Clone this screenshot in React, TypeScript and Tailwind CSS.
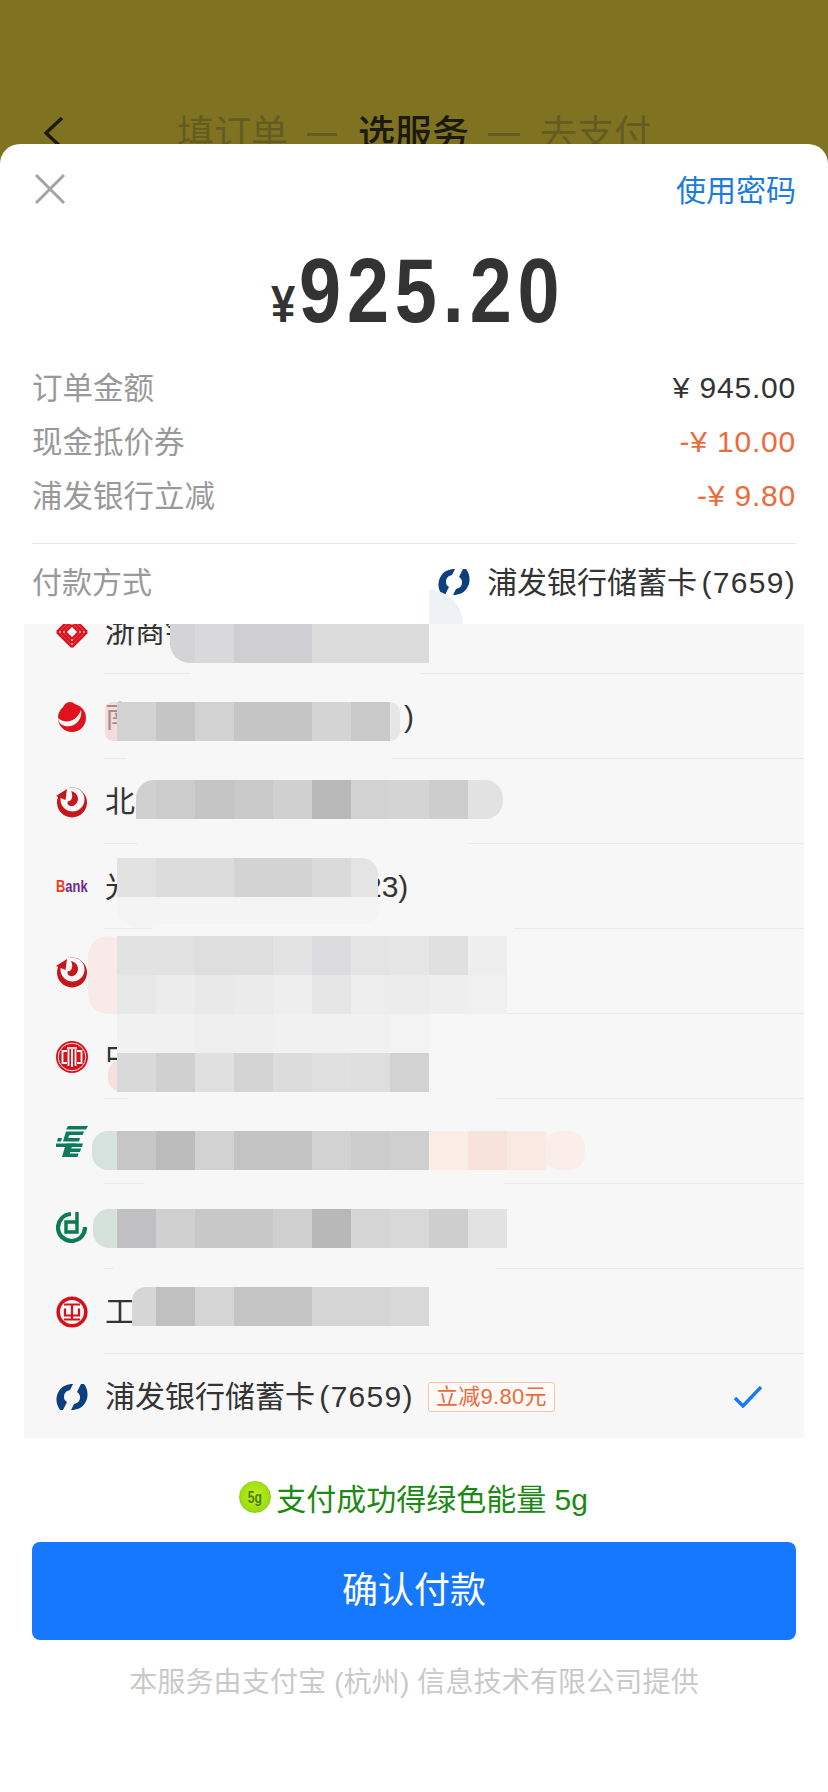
import React from "react";

const cjk = "font-['Liberation_Sans','Noto_Sans_CJK_SC',sans-serif]";

const SpdbIcon = () => (
  <svg width="32" height="28" viewBox="0 0 32 28" fill="#0b3f7e">
    <path d="M4 27C0 22-1 14 3 8C6 3 11 1 17 1L14 7C10 8 8 10 8 14C8 16 9 18 11 19L7 27Z" />
    <path d="M4 27C0 22-1 14 3 8C6 3 11 1 17 1L14 7C10 8 8 10 8 14C8 16 9 18 11 19L7 27Z" transform="rotate(180 16 14)" />
  </svg>
);

const CzbIcon = () => (
  <svg width="32" height="32" viewBox="0 0 32 32">
    <g stroke="#d9141f" strokeWidth="2.6" fill="none">
      <path d="M1 16L16 1M5 16L16 5M9 16L16 9" />
      <path d="M1 16L16 31M5 16L16 27M9 16L16 23" />
      <path d="M31 16L16 31M27 16L16 27M23 16L16 23" />
      <path d="M31 16L16 1M27 16L16 5M23 16L16 9" />
    </g>
    <path d="M16 13L19 16L16 19L13 16Z" fill="#f7f7f7" />
  </svg>
);

const CrescentIcon = () => (
  <svg width="32" height="32" viewBox="0 0 32 32">
    <circle cx="16" cy="17" r="14" fill="#e0131d" />
    <circle cx="14" cy="8" r="7" fill="#e0131d" />
    <path d="M2 17C8 23 20 22 25 9C27 18 19 27 9 25C5 24 2 21 2 17Z" fill="#f7f7f7" />
  </svg>
);

const SwirlIcon = () => (
  <svg width="32" height="32" viewBox="0 0 32 32">
    <circle cx="16" cy="16.5" r="15" fill="#c4161c" />
    <circle cx="16.5" cy="13.5" r="12" fill="#f7f7f7" />
    <path d="M0 0H15L10 5L7 11H0Z" fill="#f7f7f7" />
    <path d="M0 10L11 3L9.5 14Z" fill="#c4161c" />
    <path d="M15 5C23 7 24 15 19 19C15 22 10 19 12 15C15 16 18 11 15 5Z" fill="#c4161c" />
  </svg>
);

const BankIcon = () => (
  <div className="w-[32px] origin-left scale-x-[0.76] font-['Liberation_Sans',sans-serif] text-[17px] leading-none font-bold whitespace-nowrap text-[#6b2a90]">
    <span className="text-[#ee3b1c]">B</span>
    <span>ank</span>
  </div>
);

const CiticIcon = () => (
  <svg width="32" height="32" viewBox="0 0 32 32" fill="none">
    <circle cx="16" cy="16" r="16" fill="#d3121c" />
    <circle cx="16" cy="16" r="13.8" stroke="#fff" strokeWidth="0.9" />
    <path d="M11 10H6.5V22H11" stroke="#fff" strokeWidth="1.8" />
    <path d="M21 10H25.5V22H21" stroke="#fff" strokeWidth="1.8" />
    <path d="M11 7H21" stroke="#fff" strokeWidth="1.6" />
    <path d="M12.5 8V25M16 8V26M19.5 8V25" stroke="#fff" strokeWidth="1.8" />
  </svg>
);

const PsbcIcon = () => (
  <svg width="32" height="31" viewBox="0 0 32 31" fill="#0d7a5f">
    <path d="M12 0H32L30 3.4H10Z" />
    <path d="M10 5.6H28L26.6 9H13.5L12 12H24L23 15.4H7L8 12Z" />
    <path d="M2 12H6L5 15.4H1Z" />
    <path d="M0 17.6H20L19 21H0Z" />
    <path d="M11 17.6H27L26 21H16L15 22.6H25L24 26H14.4L13.6 27.6H22.5L21.5 31H6L8.5 22.6Z" />
  </svg>
);

const GrcbIcon = () => (
  <svg width="32" height="32" viewBox="0 0 32 32" fill="none" stroke="#0a7b52">
    <path d="M15 3A13.5 13.5 0 1 0 29 16" strokeWidth="4.2" />
    <path d="M21 1V21H10V11H20" strokeWidth="3.4" />
  </svg>
);

const IcbcIcon = () => (
  <svg width="32" height="32" viewBox="0 0 32 32" fill="none" stroke="#d3121c">
    <circle cx="16" cy="16" r="13.8" strokeWidth="3.6" />
    <path d="M8 8.5H24M16 8.5V23.5M8 23.5H24M9 12.5V19.5H23V12.5" strokeWidth="2.2" />
  </svg>
);

// tailGap keeps the bit of text showing past the mosaic at its place in the row
const rows: { id: string; icon: React.ReactNode; head: string; tail?: string; tailGap?: number }[] = [
  { id: "czb", icon: <CzbIcon />, head: "浙商银" },
  { id: "njb", icon: <CrescentIcon />, head: "南", tail: ")", tailGap: 269 },
  { id: "bob", icon: <SwirlIcon />, head: "北" },
  { id: "ceb", icon: <BankIcon />, head: "光", tail: "23)", tailGap: 230 },
  { id: "bob2", icon: <SwirlIcon />, head: "" },
  { id: "citic", icon: <CiticIcon />, head: "中" },
  { id: "psbc", icon: <PsbcIcon />, head: "" },
  { id: "grcb", icon: <GrcbIcon />, head: "" },
  { id: "icbc", icon: <IcbcIcon />, head: "工" },
];

// smudges in the list colour, coordinates are relative to the list box
const smudges = [
  { x: 166, y: 44, w: 230, h: 12, r: 6, c: "#f7f7f7" },
  { x: 102, y: 130, w: 266, h: 12, r: 6, c: "#f7f7f7" },
  { x: 114, y: 215, w: 330, h: 12, r: 6, c: "#f7f7f7" },
  { x: 93, y: 260, w: 263, h: 44, r: 22, c: "#f4f4f4" },
  { x: 128, y: 300, w: 362, h: 10, r: 5, c: "#f7f7f7" },
  { x: 64, y: 312, w: 40, h: 78, r: 26, c: "#f9eaea" },
  { x: 84, y: 436, w: 30, h: 32, r: 14, c: "#f7dfe0" },
  { x: 104, y: 470, w: 368, h: 10, r: 5, c: "#f7f7f7" },
  { x: 68, y: 507, w: 40, h: 39, r: 16, c: "#d5e2de" },
  { x: 520, y: 507, w: 41, h: 39, r: 16, c: "#fbeee9" },
  { x: 120, y: 555, w: 360, h: 10, r: 5, c: "#f7f7f7" },
  { x: 69, y: 585, w: 40, h: 39, r: 16, c: "#d5e2dc" },
  { x: 90, y: 640, w: 382, h: 10, r: 5, c: "#f7f7f7" },
];

// mosaic tiles, 39px square on a shared grid
const mosaics: { x: number; y: number; cells: string[] }[] = [
  { x: 171, y: 0, cells: ["#d9d9db", "#cfcfd1", "#cfcfd1", "#dcdcdd", "#dcdcdd", "#dcdcdd"] },
  { x: 93, y: 78, cells: ["#d2d2d2", "#c5c5c5", "#d2d2d2", "#c5c5c5", "#c5c5c5", "#d4d4d4", "#c9c9c9"] },
  { x: 132, y: 156, cells: ["#cccccc", "#c5c5c5", "#c9c9c9", "#d0d0d0", "#b9b9b9", "#d2d2d2", "#d4d4d4", "#cdcdcd"] },
  { x: 93, y: 234, cells: ["#e2e2e2", "#dcdcdc", "#dcdcdc", "#d3d3d3", "#d3d3d3", "#dadada"] },
  { x: 93, y: 312, cells: ["#e2e2e2", "#e2e2e2", "#dedede", "#dedede", "#e3e3e3", "#dcdcde", "#e4e4e4", "#e6e6e6", "#e0e0e0", "#eeeeee"] },
  { x: 93, y: 351, cells: ["#e8e8e8", "#ececec", "#e9e9e9", "#ebebeb", "#eeeeee", "#e6e6e6", "#ededed", "#ececec", "#eeeeee", "#f0f0f0"] },
  { x: 93, y: 390, cells: ["#f1f1f1", "#f1f1f1", "#efefef", "#efefef", "#f1f1f1", "#f1f1f1", "#f1f1f1", "#f3f3f3"] },
  { x: 93, y: 429, cells: ["#d9d9d9", "#d0d0d0", "#e0e0e0", "#d4d4d4", "#dcdcdc", "#e0e0e0", "#dedede", "#d2d2d2"] },
  { x: 93, y: 507, cells: ["#c6c6c6", "#bcbcbc", "#d2d2d2", "#c4c4c4", "#c4c4c4", "#d2d2d2", "#cccccc", "#cfcfcf", "#fbece6", "#f8e2dc", "#fae8e2"] },
  { x: 93, y: 585, cells: ["#c0c0c2", "#d0d0d0", "#c8c8c8", "#c8c8c8", "#cfcfcf", "#b8b8b8", "#d5d5d5", "#d8d8d8", "#cecece", "#e2e2e2"] },
  { x: 132, y: 663, cells: ["#c0c0c0", "#d5d5d5", "#c5c5c5", "#c5c5c5", "#d5d5d5", "#d5d5d5", "#d8d8d8"] },
];

// bits that fade out at the ends of the mosaic strips
const edges = [
  { x: 146, y: 0, w: 25, h: 39, c: "#d4d4d6", cls: "rounded-bl-[20px]" },
  { x: 81, y: 78, w: 12, h: 39, c: "#f5c8cc99", cls: "rounded-l-[8px]" },
  { x: 366, y: 78, w: 10, h: 39, c: "#e6e6e6", cls: "rounded-r-[10px]" },
  { x: 112, y: 156, w: 20, h: 39, c: "#d0d0d0", cls: "rounded-tl-[18px]" },
  { x: 444, y: 156, w: 35, h: 39, c: "#e2e2e2", cls: "rounded-r-[18px]" },
  { x: 327, y: 234, w: 27, h: 39, c: "#e4e4e4", cls: "rounded-tr-[16px]" },
  { x: 108, y: 663, w: 24, h: 39, c: "#d6d6d6", cls: "rounded-tl-[14px]" },
];

export default function App() {
  return (
    <div className={`h-[1792px] w-[828px] overflow-hidden bg-[#7f7321] ${cjk}`}>
      <div className="relative h-[144px] overflow-hidden">
        <svg className="absolute top-[116px] left-[41px]" width="24" height="30" viewBox="0 0 24 30" fill="none">
          <path d="M21 2L5 17L21 32" stroke="#1c1a0e" strokeWidth="3.4" />
        </svg>
        <div className="flex h-full items-end pl-[177px] text-[37px] leading-[37px] text-[#635c22]">
          <div className="-mb-[9px] flex items-center">
            <span>填订单</span>
            <span className="mr-[21px] ml-[19px] h-[3px] w-[30px] bg-[#635c22]" />
            <span className="font-medium text-[#1c1a0e]">选服务</span>
            <span className="mr-[20px] ml-[19px] h-[3px] w-[32px] bg-[#635c22]" />
            <span>去支付</span>
          </div>
        </div>
      </div>

      <div className="h-[1648px] rounded-t-[20px] bg-white">
        <div className="flex h-[61px] items-end justify-between px-[32px]">
          <svg className="ml-[2px]" width="32" height="32" viewBox="0 0 32 32" fill="none">
            <path d="M2 2L30 30M30 2L2 30" stroke="#a3a3a3" strokeWidth="3" />
          </svg>
          <span className="-mb-[3px] text-[30px] leading-[34px] text-[#1a7be0]">使用密码</span>
        </div>

        <div className="mt-[36px] flex h-[100px] items-baseline justify-center font-['Liberation_Sans',sans-serif] font-bold text-[#333333]">
          <span className="w-[28px] origin-left scale-x-[0.84] text-[52px] leading-[100px]">¥</span>
          <span className="w-[258px] origin-left scale-x-[0.84] text-[90px] leading-[100px] tracking-[7px] whitespace-nowrap">
            925.20
          </span>
        </div>

        <div className="mx-[32px] mt-[20px] leading-[54px]">
          <div className="flex h-[54px] items-center justify-between">
            <span className="text-[30.5px] text-[#999999]">订单金额</span>
            <span className="text-[30px] tracking-[0.8px] text-[#333333]">¥ 945.00</span>
          </div>
          <div className="flex h-[54px] items-center justify-between">
            <span className="text-[30.5px] text-[#999999]">现金抵价券</span>
            <span className="text-[30px] tracking-[0.8px] text-[#ec6b3b]">-¥ 10.00</span>
          </div>
          <div className="flex h-[54px] items-center justify-between">
            <span className="text-[30.5px] text-[#999999]">浦发银行立减</span>
            <span className="text-[30px] tracking-[0.8px] text-[#ec6b3b]">-¥ 9.80</span>
          </div>
        </div>

        <div className="mx-[32px] mt-[20px] border-t border-[#e8e8e8]" />

        <div className="relative flex h-[80px] items-center justify-between px-[32px] pb-[4px] text-[30px]">
          <span className="text-[#999999]">付款方式</span>
          <div className="flex items-center text-[#333333] [word-spacing:-4px]">
            <SpdbIcon />
            <span className="ml-[17px]">
              浦发银行储蓄卡 <span className="tracking-[1.3px]">(7659)</span>
            </span>
          </div>
          <div className="absolute bottom-0 left-[429px] h-[34px] w-[34px] rounded-tr-[34px] bg-[#eef1f6]" />
        </div>

        <div className="relative mx-[24px] h-[814px] overflow-hidden bg-[#f7f7f7] text-[30px] text-[#333333]">
          <div className="-mt-[35px]">
            {rows.map((r) => (
              <div key={r.id} className="flex h-[85px] items-center pl-[32px]">
                <div className="flex w-[32px] shrink-0 justify-center">{r.icon}</div>
                <div className="ml-[16px] flex h-full flex-1 items-center border-b border-[#ebebeb] pl-[1px]">
                  <span>{r.head}</span>
                  {r.tail && <span style={{ marginLeft: r.tailGap }}>{r.tail}</span>}
                </div>
              </div>
            ))}
            <div className="flex h-[85px] items-center pl-[32px]">
              <div className="flex w-[32px] shrink-0 justify-center">
                <SpdbIcon />
              </div>
              <div className="ml-[17px] flex flex-1 items-center">
                <span className="[word-spacing:-4px]">
                  浦发银行储蓄卡 <span className="tracking-[1.3px]">(7659)</span>
                </span>
                <span className="ml-[14px] rounded-[3px] border border-[#f6c5ac] bg-[#fffaf7] px-[7px] text-[22px] leading-[28px] tracking-[0.3px] text-[#e96a3a]">
                  立减9.80元
                </span>
                <svg className="absolute left-[710px]" width="28" height="22" viewBox="0 0 28 22" fill="none">
                  <path d="M1 12L9 20L27 1" stroke="#1677ff" strokeWidth="3.4" />
                </svg>
              </div>
            </div>
          </div>

          <div className="absolute inset-0">
            {smudges.map((s) => (
              <div
                key={`${s.x}-${s.y}`}
                className="absolute"
                style={{ left: s.x, top: s.y, width: s.w, height: s.h, borderRadius: s.r, background: s.c }}
              />
            ))}
            {edges.map((e) => (
              <div
                key={`${e.x}-${e.y}`}
                className={`absolute ${e.cls}`}
                style={{ left: e.x, top: e.y, width: e.w, height: e.h, background: e.c }}
              />
            ))}
            {mosaics.map((m) => (
              <div key={`${m.x}-${m.y}`} className="absolute flex" style={{ left: m.x, top: m.y }}>
                {m.cells.map((c, i) => (
                  <div key={i} className="h-[39px] w-[39px]" style={{ background: c }} />
                ))}
              </div>
            ))}
          </div>
        </div>

        <div className="flex h-[104px] justify-center pt-[44px] pr-[1px] text-[30px] leading-[36px] text-[#1b8a12]">
          <div className="flex items-start">
            <span className="-mt-[1px] flex h-[32px] w-[32px] items-center justify-center rounded-full border border-[#8fcf1a] bg-[radial-gradient(circle_at_50%_45%,#c2ef1f,#9ade12_70%,#7fcb1c)] font-['Liberation_Sans',sans-serif] text-[17px] leading-none font-bold text-[#4f7d10]">
              <span className="scale-x-[0.72]">5g</span>
            </span>
            <span className="ml-[5px]">支付成功得绿色能量 5g</span>
          </div>
        </div>

        <div className="mx-[32px] flex h-[98px] items-center justify-center rounded-[8px] bg-[#1677ff] text-[36px] text-white">
          确认付款
        </div>

        <div className="mt-[25px] text-center text-[28px] leading-[36px] tracking-[0.15px] text-[#c9c9c9]">
          本服务由支付宝 (杭州) 信息技术有限公司提供
        </div>
      </div>
    </div>
  );
}
